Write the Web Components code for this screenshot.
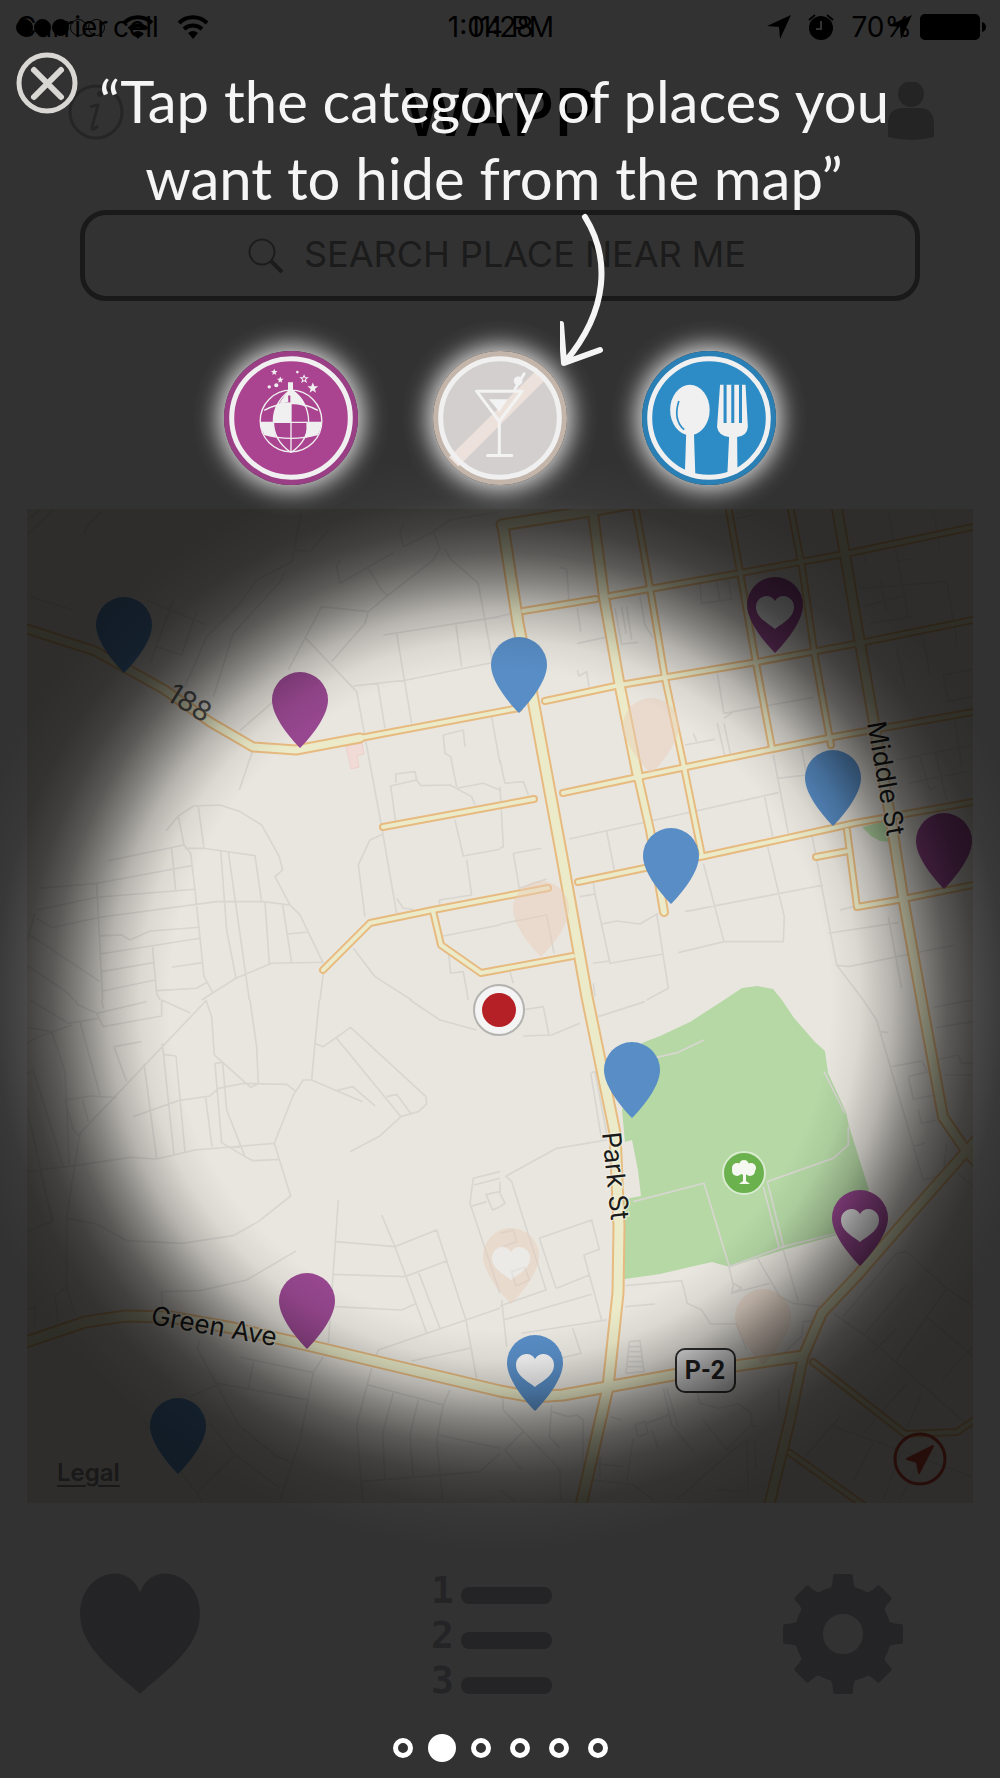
<!DOCTYPE html>
<html lang="en">
<head>
<meta charset="utf-8">
<meta name="viewport" content="width=device-width, initial-scale=1">
<title>WAPP</title>
<style>
    body {
        margin: 0;
        background: #fff;
        font-family: Inter, "Liberation Sans", sans-serif;
    }
</style>
</head>
<body>
<wapp-screen>
    <status-bar slot="base"></status-bar>
    <wapp-header slot="base">WAPP</wapp-header>
    <place-search slot="base" placeholder="SEARCH PLACE NEAR ME"></place-search>
    <place-map slot="base"></place-map>
    <tab-bar slot="base"></tab-bar>

    <coach-tip slot="coach">“Tap the category of places you<br>want to hide from the map”</coach-tip>
    <category-list slot="coach">
        <category-button type="club" label="Clubs"></category-button>
        <category-button type="bar" label="Bars" off></category-button>
        <category-button type="food" label="Restaurants"></category-button>
    </category-list>
    <page-dots slot="coach" count="6" current="2"></page-dots>
</wapp-screen>

<script>
/* Small base class, every element renders a string in an open shadow root */
class BaseElement extends HTMLElement {
    constructor() {
        super();
        this.shadow = this.attachShadow({ mode: "open" });
    }
    connectedCallback() {
        this.shadow.innerHTML = this.render();
    }
}

/* Start - Screen: app layer, dim layer with the spotlight, coach layer */
class WappScreen extends BaseElement {
    render() {
        return `
            <style>
                :host {
                    display: grid;
                    min-height: 100vh;
                    overflow: hidden;
                }
                .layer {
                    grid-area: 1 / 1;
                    display: flex;
                    flex-direction: column;
                    min-width: 0;
                }
                .dim {
                    grid-area: 1 / 1;
                    z-index: 1;
                    pointer-events: none;
                    background: radial-gradient(circle at 50% 1000px,
                        rgba(0,0,0,0) 330px, rgba(0,0,0,.06) 360px, rgba(0,0,0,.22) 392px,
                        rgba(0,0,0,.43) 420px, rgba(0,0,0,.61) 448px, rgba(0,0,0,.72) 476px,
                        rgba(0,0,0,.78) 506px, rgba(0,0,0,.802) 550px);
                }
                .coach { z-index: 2; }
            </style>
            <div class="layer"><slot name="base"></slot></div>
            <div class="dim"></div>
            <div class="layer coach"><slot name="coach"></slot></div>
        `;
    }
}
customElements.define("wapp-screen", WappScreen);
/* End - Screen */

/* Start - Status bar, two carriers' bars drawn one over the other */
class StatusBar extends BaseElement {
    render() {
        const wifi = `
            <svg class="wifi" viewBox="0 0 32 25" width="32" height="25">
                <path d="M16 24l-5-6a8 8 0 0 1 10 0z" fill="#000"/>
                <path d="M7 14a13 13 0 0 1 18 0M2 8a20 20 0 0 1 28 0" fill="none" stroke="#000" stroke-width="4"/>
            </svg>`;
        const arrow = `<svg viewBox="0 0 24 24" width="24" height="24"><path d="M24 0L13 24 12 12 0 11z"/></svg>`;
        return `
            <style>
                :host {
                    display: grid;
                    height: 54px;
                    color: #000;
                    font-size: 28px;
                    line-height: 54px;
                }
                .row {
                    grid-area: 1 / 1;
                    display: grid;
                    grid-template-columns: 1fr auto 1fr;
                    align-items: center;
                    padding: 0 14px 0 16px;
                }
                .left, .right { display: flex; align-items: center; gap: 14px; }
                .right { justify-content: flex-end; gap: 8px; }
                .back .left { gap: 18px; }
                .signal { display: flex; gap: 1px; margin-right: -10px; }
                .signal i {
                    box-sizing: border-box;
                    width: 17px;
                    height: 17px;
                    border: 1px solid #000;
                    border-radius: 50%;
                }
                .signal .on { background: #000; }
                .back .right { gap: 16px; }
                .percent { margin-right: -8px; }
            </style>
            <div class="row">
                <span class="left">Carrier ${wifi}</span>
                <span class="time">1:04 PM</span>
                <span class="right">
                    ${arrow}
                    <svg viewBox="0 0 66 26" width="66" height="26"><rect width="60" height="26" rx="5"/><path d="M62 8q4 1 4 5t-4 5z"/></svg>
                </span>
            </div>
            <div class="row back">
                <span class="left">
                    <span class="signal"><i class="on"></i><i class="on"></i><i class="on"></i><i></i><i></i></span>
                    cell ${wifi}
                </span>
                <span class="time">11:28</span>
                <span class="right">
                    ${arrow}
                    <svg viewBox="0 0 28 26" width="28" height="26">
                        <circle cx="14" cy="14" r="12"/>
                        <path d="M2 6l6-5M26 6l-6-5" stroke="#000" stroke-width="2"/>
                        <path d="M14 7v8H9" fill="none" stroke="#fff" stroke-width="2"/>
                    </svg>
                    <span class="percent">70%</span>
                    <svg viewBox="0 0 66 26" width="66" height="26"><rect x="1" y="1" width="58" height="24" rx="5" fill="none" stroke="#000" stroke-width="2"/></svg>
                </span>
            </div>
        `;
    }
}
customElements.define("status-bar", StatusBar);
/* End - Status bar */

/* Start - Header */
class WappHeader extends BaseElement {
    render() {
        return `
            <style>
                :host {
                    display: grid;
                    grid-template-columns: 1fr auto 1fr;
                    align-items: center;
                    height: 116px;
                    padding: 0 66px;
                }
                h1 {
                    margin: 0;
                    font-size: 66px;
                    line-height: 104px;
                    font-weight: 500;
                    color: #000;
                }
                button {
                    display: block;
                    padding: 0;
                    border: 0;
                    background: none;
                }
                button:last-child { justify-self: end; }
                svg { display: block; }
            </style>
            <button aria-label="Information">
                <svg viewBox="0 0 60 60" width="60" height="60">
                    <circle cx="30" cy="30" r="26" fill="none" stroke="#bbb" stroke-width="3"/>
                    <circle cx="34" cy="12" r="3" fill="#bbb"/>
                    <path d="M24 25q6-2 8-2l-6 22q-1 5 6-1" fill="none" stroke="#bbb" stroke-width="3"/>
                </svg>
            </button>
            <h1><slot></slot></h1>
            <button aria-label="Profile">
                <svg viewBox="0 0 46 60" width="46" height="60">
                    <g fill="#b6b6b6">
                        <circle cx="23" cy="12" r="13"/>
                        <path d="M0 55V42Q0 26 15 26h16q15 0 15 16v13q-22 6-46 0z"/>
                    </g>
                </svg>
            </button>
        `;
    }
}
customElements.define("wapp-header", WappHeader);
/* End - Header */

/* Start - Search box */
class PlaceSearch extends BaseElement {
    render() {
        return `
            <style>
                :host { display: block; padding: 40px 80px 0; }
                label {
                    display: flex;
                    align-items: center;
                    justify-content: center;
                    gap: 20px;
                    height: 81px;
                    border: 5px solid #828282;
                    border-radius: 26px;
                }
                input {
                    width: 448px;
                    padding: 0 0 4px;
                    border: 0;
                    background: none;
                    font-family: inherit;
                    font-size: 36px;
                    outline: none;
                }
                input::placeholder { color: #8c8c8c; opacity: 1; }
            </style>
            <label>
                <svg viewBox="0 0 36 36" width="36" height="36" fill="none" stroke="#8c8c8c">
                    <circle cx="14" cy="14" r="12.5" stroke-width="2"/>
                    <path d="M23 23l11 11" stroke-width="4"/>
                </svg>
                <input type="text" aria-label="Search place" placeholder="${this.getAttribute("placeholder")}">
            </label>
        `;
    }
}
customElements.define("place-search", PlaceSearch);
/* End - Search box */

/* Roads with the casing, w is the total width */
const ROADS = [
    { w: 11, d: "M27 629L95 651 140 676 165 690 210 722 253 747 296 750 360 738" },
    { w: 8, d: "M355 739L519 708" },
    { w: 8, d: "M545 701L620 685 757 662 860 643 973 620" },
    { w: 8, d: "M523 611L596 599M610 596L740 573 850 553 973 527" },
    { w: 13, d: "M502 525L590 511 645 501" },
    { w: 8, d: "M563 793L638 777 773 749 833 737 973 712" },
    { w: 8, d: "M383 827L534 799" },
    { w: 8, d: "M700 857L833 828 855 823 973 802M578 882L645 868 700 857" },
    { w: 8, d: "M323 970L370 923 433 910 548 888M433 911L441 945 481 973 573 956" },
    { w: 8, d: "M847 830L857 907 898 900 973 885M816 857L848 851" },
    { w: 8, d: "M636 509L650 588 665 678 684 767 702 856" },
    { w: 8, d: "M728 505L740 572 756 663 772 748M790 505L802 567 815 657 831 745" },
    { w: 12, d: "M593 513L604 597 620 687 638 777" },
    { w: 10, d: "M638 777L650 830 664 912" },
    { w: 12, d: "M836 503L845 555 860 643 873 717 893 833 903 897 921 997 943 1117 967 1152 980 1166" },
    { w: 12, d: "M980 1136L962 1156 910 1215 857 1276 822 1313 803 1357 790 1420 768 1510" },
    { w: 13, d: "M503 526L518 623 533 700 562 857 587 997 615 1133 619 1227 618 1293 608 1387 580 1510" },
    { w: 13, d: "M20 1344L85 1322 125 1316 170 1317 233 1328 307 1345 500 1391 533 1397 563 1395 607 1387 673 1375 803 1356" },
    { w: 8, d: "M813 1362L905 1434 957 1432 980 1416M790 1453L870 1510" }
];

/* Side streets, each tile is drawn at 3x */
const STREETS = [
    { at: "0 500", d: `M80 105L160 30M80 60L120 30M90 290L220 330M250 105L265 75 305 35M905 30L875 185 770 240 720 310 620 410 555 560
        M850 220L845 240 700 400 640 590M440 300L620 375M520 300L450 490M590 335L545 465 470 440M985 90L930 155 885 150M1020 180L1010 200 1020 250 1180 158
        M1105 205L1145 270 1165 290M1210 70L1200 100 1210 140 1300 95 1350 60 1500 35M1300 95L1320 145 1300 180 1165 285 1105 335 965 320 865 510
        M1335 145L1350 175 1435 250 1455 360 1480 500M1105 335L1095 370 995 485M918 415L1070 575 1145 980 1190 1240M1150 405L1500 350M1190 400L1235 670M1368 375L1385 500
        M1060 558L1220 540 1500 483M1133 550L1155 685M820 605L720 692M757 755L718 870M1475 650L1500 790M1395 740L1390 690 1330 705 1335 760 1352 770 1370 860
        M1187 965L1172 858 1250 840 1245 815 1187 822 1188 848M1250 840L1262 857 1350 855 1415 890 1425 915M1370 865L1450 850 1500 870M1365 960L1390 1068 1500 1048
        M1400 1080L1415 1185 1318 1200 1320 1225M1148 1003L1110 1020 1075 1095 1095 1250M1190 1195L1210 1225 1240 1228M1330 1308L1500 1275M1345 1350L1352 1420 1390 1415 1405 1500
        M1060 1345L1125 1430 1235 1500M970 1420L960 1500M498 993L535 948 580 918 660 915 720 935 785 975 838 1070 848 1110 825 1130 870 1215 900 1245 970 1390
        M595 920L612 1045M535 950L552 1035 325 1082M552 1035L572 1060 585 1170 612 1430 640 1480M555 1045L610 1045 765 1067 785 1205M662 1050L680 1290 708 1435M685 1055L748 1500
        M515 1045L527 1170M120 1165L290 1150 575 1097M110 1230L290 1192 585 1168M110 1255L155 1283 300 1252 650 1205 790 1205 870 1215M290 1150L308 1500M300 1308L365 1305 390 1320 450 1293 600 1282
        M300 1362L600 1315M305 1415L460 1388M457 1335L470 1480 480 1500M515 1402L607 1388M308 1473L465 1440M470 1472L590 1465 622 1447M605 1500L708 1435 815 1390 970 1387
        M795 1205L808 1390M848 1215L875 1387M862 1302L920 1297M90 1305L300 1445M80 1395L205 1480 220 1500M80 1325L105 1240` },
    { at: "500 500", d: `M0 780L15 850 70 845 85 885M0 1045L10 1040 0 860M40 1060L125 1045M40 1060L58 1165 140 1137M0 1272L140 1245 162 1360M30 1415L40 1450M180 203L200 207 207 300
        M232 325L242 395M232 430L315 412M0 348L40 340M232 510L237 528 260 515 267 560M345 325L365 432 415 427M365 320L378 400M380 320L395 420M420 290L435 375 460 415M600 250L605 310 700 297M650 245L660 300M685 240L695 300
        M652 520L672 640 940 592M672 655L705 632M652 670L675 770M672 670L692 765M555 735L645 718M580 700L590 725M820 765L865 1000M905 745L925 850M830 835L920 825
        M208 1017L835 878M793 885L818 1010M320 995L343 1110M240 1190L285 1182 330 1390 490 1362M280 1150L285 1182M305 1272L350 1263 420 1272 475 1240M470 1240L505 1465 440 1500M280 1450L285 1490
        M555 1235L970 1155M610 1090L672 1325 850 1325 853 1250 803 1040M535 1358L672 1325M278 1390L330 1383M935 1000L1010 1395 1090 1500M985 1300L1195 1268M1010 1395L1045 1400 1365 1335M1165 1250L1205 1465M1020 1230L1060 1220
        M710 55L760 45M1165 35L1225 350M1300 30L1320 150M1080 265L1340 245 1360 360M1090 320L1220 285M1110 370L1240 350M1140 240L1160 330M1190 185L1240 175M1090 160L1100 195M1190 440L1215 560M1270 415L1290 525M1365 380L1370 440M1330 525L1418 508M1330 525L1345 605 1418 590
        M1190 780L1418 735M1260 770L1290 870 1310 860M1305 755L1340 900M1365 665L1385 800M1225 850L1400 815` },
    { at: "0 1000", d: `M90 0L205 70 295 55M80 82L155 95M80 130L115 110 215 75M225 0L235 15 290 40 440 5M290 40L310 80 485 48 485 0 570 38M305 0L310 25M620 0L240 400 200 650 200 860 225 945
        M155 95L195 215 208 500M240 65L300 285M80 220L95 215M98 205L190 500M80 320L155 660M120 515L160 662 80 695M425 125L342 140 380 245M195 300L275 288 350 293M195 300L220 390 240 410M248 300L265 365
        M432 190L470 475M487 130L522 465M490 163L528 168 555 455M400 350L535 302 630 288 655 265 730 250 860 253 885 272M617 293L636 440M645 190L665 428 735 470 760 482 838 478M645 190L668 187 680 330 735 470
        M618 0L635 50 643 165 752 262 775 252 770 140 750 0M958 0L945 130 935 240 910 240 880 285 823 430 872 588 775 665 700 707 545 730 380 722 290 672 200 655M80 515L225 497 390 472 470 477 585 450 823 430
        M945 130L970 140 1052 82 1278 290 1280 312 1255 335 1203 350 1140 408 1050 455M1010 115L1203 350M935 240L1010 272 1088 305M1010 272L1058 260 1125 318M1160 290L1190 283 1232 340M1230 0L1320 60 1430 90
        M485 875L600 872 740 840 888 753M485 875L487 925M1015 600L985 1030M1145 645L1185 740 1280 998M1008 725L1185 740 1310 690 1398 960 1430 1135M1000 823L1215 830 1340 783M1005 920L1205 930 1245 912M1255 815L1320 985
        M1500 925L1135 1050 1130 1065M1235 1083L1410 1045M1500 515L1420 535 1410 610 1500 880M1422 555L1500 535M1410 620L1460 605M1500 575L1458 583 1478 630 1500 620
        M600 1020L592 1045 650 1155 715 1275 830 1370 870 1385M720 1072L940 1118 970 1070M760 1085L745 1165M940 1118L900 1320 840 1500M650 1150L925 1200M650 1155L570 1190M630 1270L705 1365 840 1465M705 1365L590 1480M430 1260L605 1500
        M1115 1105L1070 1275 1088 1500M1105 1155L1330 1215 1350 1170M1180 1180L1148 1300 1155 1440M1255 1200L1230 1305 1240 1435M1330 1215L1310 1320 1328 1500M1315 1305L1500 1345M1085 1445L1440 1415 1500 1360M170 880L165 890 175 965M170 885L200 860M80 930L105 920 105 980` },
    { at: "500 1000", d: `M65 30L130 20 147 105M70 108L155 105 240 70M295 50L435 5M272 218L305 420M275 218L285 215 320 400M15 530L170 445 320 420M0 580L15 610 0 620M20 530L35 545 138 870 0 918M0 580L0 545M118 715L275 660 298 748 252 765 268 825 170 865M118 715L168 865M268 825L305 960M0 700L40 690 50 725 10 740M35 815L75 802 88 840 48 858Z
        M10 960L275 883M65 1000L320 960M218 985L243 1060 180 1075M5 900L20 1040M375 857L545 842 562 910 605 930 632 972 710 972 740 1050M375 920L465 912M680 770L700 855 695 880 725 865 700 850M695 880L810 850M770 770L840 890 880 910 960 920M850 750L895 905
        M378 1120L388 1025 420 1022 432 1115ZM384 1040H424M383 1055H426M382 1070H427M381 1085H428M380 1100H430M8 1190L10 1230 180 1410 182 1500M155 1215L148 1310 180 1345M155 1235L205 1250 230 1245 250 1260 248 1400M70 1295L15 1350 65 1410M0 1470L45 1505
        M490 1165L515 1275 580 1355M500 1165L535 1280M590 1170L600 1210 655 1225 715 1212 755 1240 755 1275 680 1350 610 1260M440 1270L505 1245M405 1275L435 1265 445 1300 415 1310ZM330 1250L365 1260M455 1290L475 1345M400 1315L380 1445M270 1390L370 1400M300 1370L300 1430M275 1440L400 1455 460 1500M530 1500L700 1350 740 1320 745 1470M765 1320L768 1410M650 1470L730 1475M750 1280L775 1278M835 1165L838 1240
        M1090 0L1130 60 1165 180 1270 540 1330 525 1340 430M1138 95L1165 98M1175 200L1265 183 1280 210M1375 165L1385 190 1418 190M1310 180L1375 165M1300 22L1418 0M1310 83L1418 65M1225 230L1240 297 1330 280M1225 230L1285 215M1255 330L1265 370 1310 360M1335 225H1418M1238 440L1275 430M1375 520L1418 560
        M1000 940L1100 1010 1215 1110 1420 1290M1030 950L1190 760 1220 755 1340 865 1420 920M1095 1000L1220 855M1115 1060L1190 985M1340 865L1190 1080M1285 955L1420 1070M1420 1040L1325 1140M1220 1150L1090 1300M1265 1180L1180 1380M990 1275L1420 1430M1020 1250L890 1400M1120 1330L1060 1440M1200 1360L1150 1500M1250 1400L1200 1500M905 965L965 960M850 1060L905 1010 910 965` }
];

/* Paths inside the park, same 3x tile */
const FOOTPATHS = `M470 172L535 157 612 120M400 605L612 550 688 800 770 770 850 740 1010 700M790 560L838 745M802 545L852 745M802 545L1000 475 1045 435 1045 380M972 215L1035 340`;

const PINS = [
    { kind: "ghost", x: 651, y: 774 },
    { kind: "ghost", x: 541, y: 957 },
    { kind: "ghost", x: 511, y: 1304, fav: true },
    { kind: "ghost", x: 763, y: 1365 },
    { kind: "food", x: 124, y: 673 },
    { kind: "club", x: 300, y: 748 },
    { kind: "food", x: 519, y: 713 },
    { kind: "club", x: 775, y: 653, fav: true },
    { kind: "food", x: 833, y: 826 },
    { kind: "food", x: 671, y: 904 },
    { kind: "club", x: 944, y: 889 },
    { kind: "food", x: 632, y: 1118 },
    { kind: "club", x: 860, y: 1266, fav: true },
    { kind: "food", x: 535, y: 1411, fav: true },
    { kind: "club", x: 307, y: 1349 },
    { kind: "food", x: 178, y: 1474 }
];

/* Start - Map */
class PlaceMap extends BaseElement {
    renderPin({ kind, x, y, fav }) {
        const heart = "M0-24C-6-29-19-35-19-46c0-11 14-15 19-6 5-9 19-5 19 6 0 11-13 17-19 22z";
        return `
            <g class="pin ${kind}" transform="translate(${x} ${y})">
                <path d="M0 0C-9-9-28-31-28-48a28 28 0 0 1 56 0C28-31 9-9 0 0z"/>
                ${fav ? `<path class="fav" d="${heart}"/>` : ""}
            </g>`;
    }
    render() {
        const casing = ROADS.map((road) => `<path d="${road.d}" stroke-width="${road.w}"/>`).join("");
        const fill = ROADS.map((road) => `<path d="${road.d}" stroke-width="${road.w - 4}"/>`).join("");
        const streets = STREETS.map((tile) => `<path transform="translate(${tile.at}) scale(.3333)" d="${tile.d}"/>`).join("");
        return `
            <style>
                :host {
                    display: block;
                    position: relative;
                    margin: 208px 27px 0;
                }
                .map { display: block; width: 100%; height: auto; }
                .streets { fill: none; stroke: #d8d6d1; stroke-width: 5; stroke-linejoin: round; }
                .roads { fill: none; stroke-linejoin: round; }
                .casing { stroke: #e7ba80; stroke-linecap: round; }
                .fill { stroke: #ebebc9; stroke-linecap: round; }
                .pin.food { fill: #588dc5; }
                .pin.club { fill: #97478f; }
                .pin.ghost { fill: #e8cdb9; opacity: .45; }
                .pin .fav { fill: #f0f0f0; }
                text {
                    font-size: 26px;
                    fill: #1a1a1a;
                    stroke: #f3f2ea;
                    stroke-opacity: .6;
                    stroke-width: 3;
                    paint-order: stroke;
                }
                .route { font-size: 28px; fill: #555; stroke: none; }
                .sign { font: bold 25px Roboto, sans-serif; fill: #222; stroke: none; }
                a {
                    position: absolute;
                    left: 30px;
                    bottom: 14px;
                    color: #808080;
                    font-size: 24px;
                    line-height: 32px;
                    font-weight: 600;
                    text-underline-offset: 4px;
                }
                button {
                    position: absolute;
                    right: 26px;
                    bottom: 17px;
                    padding: 0;
                    border: 0;
                    background: none;
                }
                button svg { display: block; }
            </style>
            <svg class="map" viewBox="27 509 946 994">
                <rect x="27" y="509" width="946" height="994" fill="#e9e6df"/>
                <g class="streets">${streets}</g>
                <path fill="#f0dbd7" stroke="#ecd0cd" d="M346 746l16-3 2 11-7 2 2 11-8 2z"/>
                <g fill="#b5d8a5">
                    <path d="M622 1110L642 1043 660 1036 690 1022 724 1000 742 988 757 986 773 989 782 1000 794 1018 815 1042 825 1051 828 1073 846 1112 849 1126 869 1190 860 1228 855 1230 783 1250 730 1267 712 1262 690 1267 660 1274 618 1280 620 1200 641 1196 638 1170 632 1140 625 1142z"/>
                    <path d="M862 827l24-6 4 21-10-1-9-5z"/>
                </g>
                <path class="streets" transform="translate(500 1000) scale(.3333)" d="${FOOTPATHS}"/>
                <g class="roads casing">${casing}</g>
                <g class="roads fill">${fill}</g>

                <circle cx="744" cy="1173" r="21" fill="#6bb24f" stroke="#d9ebd0" stroke-width="2"/>
                <g fill="#f4f8f1">
                    <circle cx="744" cy="1165" r="5"/><circle cx="737" cy="1168" r="5"/><circle cx="751" cy="1168" r="5"/>
                    <circle cx="737" cy="1171" r="5"/><circle cx="750" cy="1171" r="5"/><circle cx="744" cy="1170" r="5"/>
                    <path d="M743 1172h3v9l4 3h-11l4-3z"/>
                </g>

                ${PINS.map((pin) => this.renderPin(pin)).join("")}

                <text class="route" transform="translate(165 699) rotate(32)">188</text>
                <text transform="translate(150 1324) rotate(10)">Green Ave</text>
                <text transform="translate(602 1133) rotate(84)">Park St</text>
                <text transform="translate(867 723) rotate(80)">Middle St</text>
                <rect x="676" y="1349" width="59" height="43" rx="9" fill="#f0f0f0" stroke="#333" stroke-width="2"/>
                <text class="sign" x="705" y="1379" text-anchor="middle">P-2</text>

                <circle cx="499" cy="1010" r="25" fill="#f4f4f4" stroke="#b5b3b0" stroke-width="2"/>
                <circle cx="499" cy="1010" r="17" fill="#b42025"/>
            </svg>
            <a href="#legal">Legal</a>
            <button aria-label="My location">
                <svg viewBox="0 0 54 54" width="54" height="54">
                    <circle cx="27" cy="27" r="25" fill="none" stroke="#c04434" stroke-width="3"/>
                    <path d="M40 14L26 41 24 30 14 27z" fill="#c04434" stroke="#c04434" stroke-linejoin="round" stroke-width="2"/>
                </svg>
            </button>
        `;
    }
}
customElements.define("place-map", PlaceMap);
/* End - Map */

/* Start - Tab bar */
class TabBar extends BaseElement {
    render() {
        const teeth = [0, 45, 90, 135, 180, 225, 270, 315]
            .map((angle) => `<path d="M-17-42Q-10-44-10-58q0-2 3-2H7q3 0 3 2 0 14 7 16z" transform="rotate(${angle})"/>`)
            .join("");
        const rows = [1, 2, 3]
            .map((n, i) => `<text x="0" y="${29 + i * 45}">${n}</text><rect x="30" y="${13 + i * 45}" width="91" height="17" rx="8"/>`)
            .join("");
        return `
            <style>
                :host {
                    display: flex;
                    justify-content: space-between;
                    padding: 71px 97px 70px 80px;
                }
                button {
                    padding: 0;
                    border: 0;
                    background: none;
                }
                svg { display: block; overflow: visible; fill: #b9b9c2; }
                text { font: bold 38px "DejaVu Sans Mono", monospace; }
            </style>
            <button aria-label="Favourites">
                <svg viewBox="0 0 120 134" width="120" height="134">
                    <path d="M60 120C40 101 0 76 0 40 0-2 49-15 60 19 71-15 120-2 120 40c0 36-40 61-60 80z"/>
                </svg>
            </button>
            <button aria-label="List">
                <svg viewBox="0 0 122 134" width="122" height="134">${rows}</svg>
            </button>
            <button aria-label="Settings">
                <svg viewBox="-60 -60 120 134" width="120" height="134">
                    ${teeth}
                    <circle r="34" fill="none" stroke="#b9b9c2" stroke-width="28"/>
                </svg>
            </button>
        `;
    }
}
customElements.define("tab-bar", TabBar);
/* End - Tab bar */

/* Start - Coach tip with the close button and the arrow */
class CoachTip extends BaseElement {
    render() {
        return `
            <style>
                :host {
                    display: block;
                    position: relative;
                    height: 351px;
                    color: #f5f5f5;
                }
                p {
                    margin: 0;
                    padding: 62px 12px 0 0;
                    text-align: center;
                    font-family: Lato, sans-serif;
                    font-size: 58px;
                    line-height: 77px;
                }
                button {
                    position: absolute;
                    left: 16px;
                    top: 52px;
                    padding: 0;
                    border: 0;
                    background: none;
                }
                svg { display: block; fill: none; stroke-linecap: round; stroke-linejoin: round; }
                .arrow {
                    position: absolute;
                    left: 56%;
                    top: 212px;
                    stroke: #f5f5f5;
                    stroke-width: 6;
                }
            </style>
            <button aria-label="Close">
                <svg viewBox="0 0 62 62" width="62" height="62" stroke="#d9d7d4">
                    <circle cx="31" cy="31" r="28" stroke-width="5"/>
                    <path d="M18 18l27 27M45 18L18 45" stroke-width="6"/>
                </svg>
            </button>
            <p><slot></slot></p>
            <svg class="arrow" viewBox="0 0 50 156" width="50" height="156">
                <path d="M25 5C50 45 49 98 5 150M1 112L4 151 40 138"/>
            </svg>
        `;
    }
}
customElements.define("coach-tip", CoachTip);
/* End - Coach tip */

/* Start - Category buttons */
class CategoryList extends BaseElement {
    render() {
        return `
            <style>
                :host {
                    display: flex;
                    justify-content: center;
                    gap: 75px;
                }
            </style>
            <slot></slot>
        `;
    }
}
customElements.define("category-list", CategoryList);

const STAR = "M0-10L3-3 10-3 4 2 6 9 0 5-6 9-4 2-10-3-3-3z";
const CATEGORY_ICONS = {
    club: `
        <g fill="none" stroke="#f0f0f0" stroke-width="4">
            <circle cx="228" cy="244" r="92"/>
            <path d="M137 248H319M228 150V338M228 150C158 200 158 290 228 338M228 150C298 200 298 290 228 338M148 212Q228 170 308 212M148 284Q228 308 308 284"/>
        </g>
        <g fill="#f0f0f0">
            <path d="M219 128h15v40h-15zM228 150C252 160 268 185 272 202Q250 190 228 190zM189 192Q205 188 228 188V250H174Q174 215 189 192zM136 248H175Q176 272 184 292L148 284Q137 268 136 248zM274 248H320Q318 270 308 284L270 294Q276 270 274 248zM193 190L219 155 220 187z"/>
            <path d="${STAR}" transform="translate(293 145) scale(1.6)"/>
            <path d="${STAR}" transform="translate(178 98)"/>
            <path d="${STAR}" transform="translate(196 121)"/>
            <circle cx="163" cy="142" r="5"/><circle cx="184" cy="137" r="6"/><circle cx="247" cy="98" r="4"/>
        </g>
        <path d="${STAR}" transform="translate(267 118)" fill="none" stroke="#f0f0f0" stroke-width="3"/>`,
    bar: `
        <g transform="translate(-12 0)">
            <path d="M88 352L350 92 378 118 116 380z" fill="#ede2db"/>
            <path d="M170 155H306L238 245zM238 245V346M203 347H275M284 150L312 103" fill="none" stroke="#f3f3f3" stroke-width="9" stroke-linejoin="round" stroke-linecap="round"/>
            <path d="M207 179H263L238 216z" fill="#f3f3f3"/>
            <circle cx="294" cy="124" r="13" fill="#f3f3f3"/>
        </g>`,
    food: `
        <g transform="translate(-6 0)" fill="#f0f0f0">
            <ellipse cx="177" cy="211" rx="59" ry="75"/>
            <path d="M166 278H189L193 400H162z"/>
            <path d="M267 136H343L350 262Q348 288 318 292L319 400H289L294 292Q262 288 258 262z"/>
            <g fill="none" stroke="#2d8cc6">
                <path d="M282 134V250M305 134V250M328 134V250" stroke-width="9"/>
                <path d="M144 184Q126 240 160 270" stroke-width="5"/>
            </g>
        </g>`
};
const CATEGORY_COLORS = {
    club: ["#9a3f86", "#ab4490"],
    bar: ["#c3b5aa", "#d3cfcf"],
    food: ["#2a7fb4", "#2d8cc6"]
};

class CategoryButton extends BaseElement {
    get type() {
        return this.getAttribute("type");
    }
    render() {
        const [edge, face] = CATEGORY_COLORS[this.type];
        return `
            <style>
                :host { display: block; }
                button {
                    display: block;
                    padding: 0;
                    border: 0;
                    border-radius: 50%;
                    background: none;
                    box-shadow: 0 0 24px 5px rgba(255,255,255,.85);
                }
                svg { display: block; }
            </style>
            <button aria-label="${this.getAttribute("label")}" aria-pressed="${!this.hasAttribute("off")}">
                <svg viewBox="28 35 400 400" width="134" height="134">
                    <circle cx="228" cy="235" r="200" fill="${edge}"/>
                    <circle cx="228" cy="235" r="177" fill="${face}"/>
                    ${CATEGORY_ICONS[this.type]}
                    <circle cx="228" cy="235" r="177" fill="none" stroke="#f0f0f0" stroke-width="15"/>
                </svg>
            </button>
        `;
    }
}
customElements.define("category-button", CategoryButton);
/* End - Category buttons */

/* Start - Page dots */
class PageDots extends BaseElement {
    render() {
        const current = Number(this.getAttribute("current"));
        const dots = Array.from({ length: Number(this.getAttribute("count")) }, (_, i) =>
            `<button aria-label="Tip ${i + 1}" class="${i + 1 === current ? "on" : ""}"></button>`).join("");
        return `
            <style>
                :host {
                    display: flex;
                    justify-content: center;
                    align-items: center;
                    gap: 19px;
                    margin-top: auto;
                    padding-bottom: 16px;
                }
                button {
                    box-sizing: border-box;
                    width: 20px;
                    height: 20px;
                    padding: 0;
                    border: 5px solid #fff;
                    border-radius: 50%;
                    background: none;
                }
                .on { width: 28px; height: 28px; margin: 0 -4px; background: #fff; }
            </style>
            ${dots}
        `;
    }
}
customElements.define("page-dots", PageDots);
/* End - Page dots */
</script>
</body>
</html>
